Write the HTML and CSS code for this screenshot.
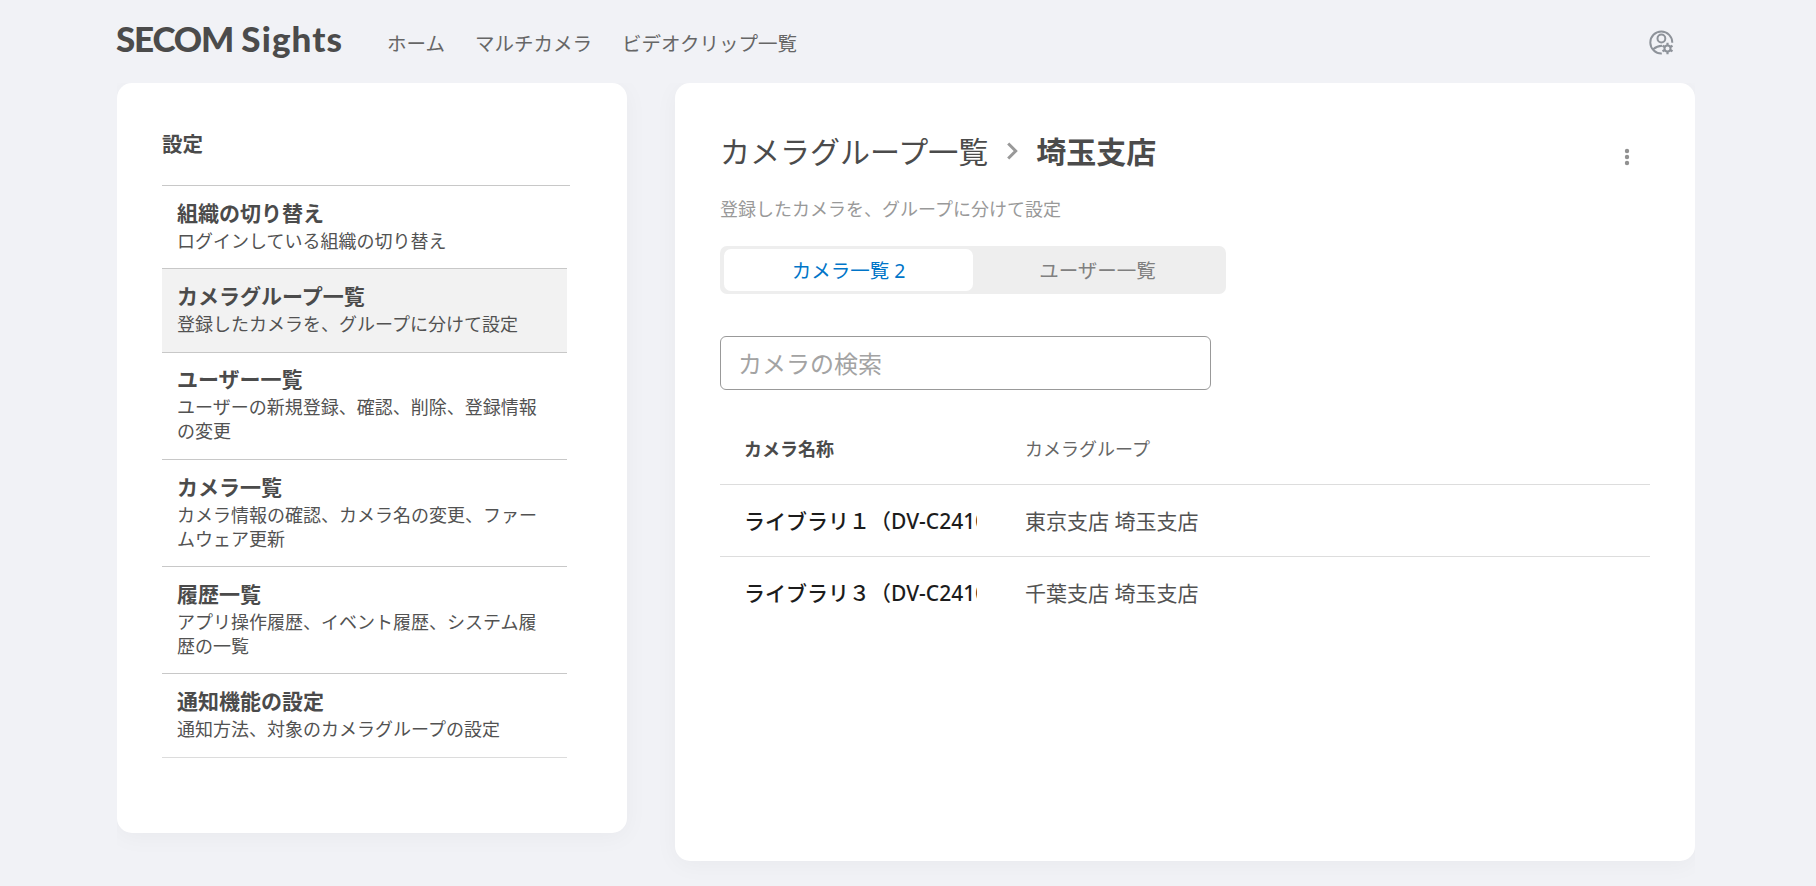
FILE: index.html
```html
<!DOCTYPE html>
<html lang="ja">
  <head>
    <meta charset="UTF-8" />
    <meta name="viewport" content="width=device-width, initial-scale=1.0" />
    <title>SECOM Sights</title>
    <link rel="stylesheet" href="styles.css">
  </head>
  <body>
    <header class="header">
      <div class="logo"><span class="logo-brand">SECOM</span> <span class="logo-name">Sights</span></div>
      <nav class="nav">
        <a>ホーム</a>
        <a>マルチカメラ</a>
        <a>ビデオクリップ一覧</a>
      </nav>
      <svg class="account" viewBox="0 0 26 26" fill="none" stroke="#8e939a" stroke-width="2">
        <path d="M12.8 23.5A11 11 0 1 1 23.3 12.8" />
        <circle cx="12.4" cy="8.5" r="3.9" />
        <path d="M4.2 19.2Q8 16 13 15.8" />
        <circle cx="18.5" cy="18.5" r="3" />
        <path stroke-width="2.2" d="M18.5 15.4v-2.6M18.5 24.2v-2.6M21.2 17l2.3-1.3M13.5 21.3l2.3-1.3M21.2 20l2.3 1.3M13.5 15.7l2.3 1.3" />
      </svg>
    </header>

    <div class="content">
      <!-- Settings menu -->
      <aside class="sidebar">
        <h2>設定</h2>
        <ul class="menu">
          <li>
            <h3>組織の切り替え</h3>
            <p>ログインしている組織の切り替え</p>
          </li>
          <li class="active">
            <h3>カメラグループ一覧</h3>
            <p>登録したカメラを、グループに分けて設定</p>
          </li>
          <li>
            <h3>ユーザー一覧</h3>
            <p>ユーザーの新規登録、確認、削除、登録情報の変更</p>
          </li>
          <li>
            <h3>カメラ一覧</h3>
            <p>カメラ情報の確認、カメラ名の変更、ファームウェア更新</p>
          </li>
          <li>
            <h3>履歴一覧</h3>
            <p>アプリ操作履歴、イベント履歴、システム履歴の一覧</p>
          </li>
          <li>
            <h3>通知機能の設定</h3>
            <p>通知方法、対象のカメラグループの設定</p>
          </li>
        </ul>
      </aside>

      <!-- Camera group detail -->
      <main class="panel">
        <div class="panel-head">
          <h1 class="breadcrumb">
            <span>カメラグループ一覧</span>
            <svg class="chevron" viewBox="0 0 12 18" fill="none" stroke="#999" stroke-width="3">
              <path d="M2.2 1.5L9.7 9L2.2 16.5" />
            </svg>
            <strong>埼玉支店</strong>
          </h1>
          <svg class="more" viewBox="0 0 6 18" fill="#919191">
            <circle cx="3" cy="3" r="2.2" />
            <circle cx="3" cy="9" r="2.2" />
            <circle cx="3" cy="15" r="2.2" />
          </svg>
        </div>
        <p class="lead">登録したカメラを、グループに分けて設定</p>

        <div class="tabs">
          <button class="tab selected">カメラ一覧 2</button>
          <button class="tab">ユーザー一覧</button>
        </div>

        <input class="search" type="text" placeholder="カメラの検索" />

        <div class="table">
          <div class="row head">
            <div class="name">カメラ名称</div>
            <div class="group">カメラグループ</div>
          </div>
          <div class="row">
            <div class="name">ライブラリ１（DV-C2410）</div>
            <div class="group">東京支店 埼玉支店</div>
          </div>
          <div class="row">
            <div class="name">ライブラリ３（DV-C2410）</div>
            <div class="group">千葉支店 埼玉支店</div>
          </div>
        </div>
      </main>
    </div>
  </body>
</html>
```
FILE: styles.css
```css
:root {
  --bg: #f1f2f6;
  --text: #4b4b4b;
  --muted: #999;
  --blue: #0075c8;
}

* {
  box-sizing: border-box;
}

body {
  margin: 0;
  height: 100vh;
  overflow: hidden;
  background: var(--bg);
  color: var(--text);
  font-family: "Noto Sans", "Noto Sans CJK JP", sans-serif;
}

h1,
h2,
h3,
p,
ul {
  margin: 0;
  padding: 0;
}

.header {
  display: flex;
  height: 83px;
  padding: 0 141px 0 116px;
}

.logo {
  width: 271px;
  padding-top: 16px;
  font-family: Lato, sans-serif;
  font-size: 35px;
  font-weight: 900;
  line-height: 44px;
  white-space: nowrap;
}

.logo-brand {
  letter-spacing: -1.2px;
}

.logo-name {
  letter-spacing: 1.1px;
}

.nav {
  display: flex;
  gap: 30px;
  padding-top: 29px;
  font-size: 19.5px;
  line-height: 30px;
  color: #666;
}

.account {
  width: 26px;
  height: 26px;
  margin: 30px 0 0 auto;
}

.content {
  display: flex;
  align-items: flex-start;
  gap: 48px;
  height: calc(100vh - 83px);
  margin: 0 121px 0 117px;
  overflow: hidden;
}

.sidebar,
.panel {
  background: #fff;
  border-radius: 15px;
  box-shadow: 0 4px 24px rgba(0, 0, 0, 0.04);
}

.sidebar {
  width: 510px;
  height: 750px;
  padding: 42px 57px 0 45px;
}

.sidebar h2 {
  height: 61px;
  border-bottom: 1px solid #c8c8c8;
  font-size: 20.5px;
  font-weight: 700;
  line-height: 38px;
}

.menu {
  width: 405px;
  list-style: none;
}

.menu li {
  padding: 10.7px 15px 15.6px;
  border-bottom: 1px solid #c8c8c8;
}

.menu li:last-child {
  border-color: #dcdcdc;
}

.menu .active {
  background: #f2f2f2;
}

.menu h3 {
  font-size: 21px;
  font-weight: 700;
  line-height: 32px;
}

.menu p {
  color: #525252;
  font-size: 18px;
  line-height: 24px;
}

.panel {
  width: 1020px;
  height: 778px;
  padding: 45px 45px 0;
}

.panel-head {
  display: flex;
  justify-content: space-between;
}

.breadcrumb {
  display: flex;
  align-items: center;
  font-size: 30px;
  font-weight: 400;
  line-height: 48px;
}

.chevron {
  width: 12px;
  height: 18px;
  margin: 0 18px 2px;
}

.more {
  width: 6px;
  height: 18px;
  margin: 20px 20px 0 0;
}

.lead {
  margin-top: 20px;
  color: var(--muted);
  font-size: 18px;
  line-height: 26px;
}

.tabs {
  display: flex;
  width: 506px;
  height: 48px;
  margin-top: 24px;
  padding: 3px 4px;
  background: #eee;
  border-radius: 7px;
}

.tab {
  flex: 1;
  padding: 0 6px 2px;
  border: none;
  border-radius: 7px;
  background: none;
  color: #808080;
  font-family: inherit;
  font-size: 19.5px;
}

.tab.selected {
  background: #fff;
  color: var(--blue);
}

.search {
  display: block;
  width: 491px;
  height: 54px;
  margin-top: 42px;
  padding: 0 17px;
  border: 1px solid #999;
  border-radius: 6px;
  font-family: inherit;
  font-size: 24px;
}

.search::placeholder {
  color: #a3a3a3;
}

.table {
  margin-top: 23px;
}

.row {
  display: flex;
  align-items: center;
  height: 72px;
  padding: 0 24px 2px;
  color: #525252;
  font-size: 21px;
  white-space: nowrap;
}

.row + .row {
  border-top: 1px solid #ddd;
}

/* long camera names are clipped at the column edge */
.name {
  width: 233px;
  margin-right: 48px;
  overflow: hidden;
  color: #1c1c1c;
  font-weight: 500;
}

.head {
  height: 71px;
  color: #666;
  font-size: 18px;
}

.head .name {
  color: var(--text);
  font-weight: 700;
}
```
